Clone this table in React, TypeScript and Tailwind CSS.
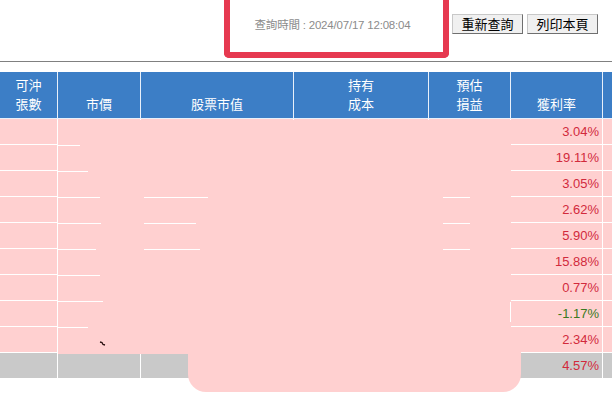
import React from "react";

const COLS = "grid-cols-[58px_83px_153px_135px_82px_92px_9px]";

const rates: { v: string; neg?: boolean }[] = [
  { v: "3.04%" },
  { v: "19.11%" },
  { v: "3.05%" },
  { v: "2.62%" },
  { v: "5.90%" },
  { v: "15.88%" },
  { v: "0.77%" },
  { v: "-1.17%", neg: true },
  { v: "2.34%" },
];

const headers: string[][] = [
  ["可沖", "張數"],
  ["市價"],
  ["股票市值"],
  ["持有", "成本"],
  ["預估", "損益"],
  ["獲利率"],
  [""],
];

// white line fragments left visible inside the redacted area: [top, left, width]
const hLines: [number, number, number][] = [
  [145, 58, 22],
  [171, 58, 30],
  [197, 58, 42],
  [197, 144, 64],
  [197, 443, 27],
  [223, 58, 43],
  [223, 144, 52],
  [223, 443, 27],
  [249, 58, 38],
  [249, 144, 56],
  [249, 443, 27],
  [275, 58, 42],
  [301, 58, 45],
  [327, 58, 30],
];

function Button({ children }: { children: React.ReactNode }) {
  return (
    <button className="h-[20px] w-[71px] bg-[#f0f0f0] border border-t-[#c8c8c8] border-l-[#c8c8c8] border-b-[#6f6f6f] border-r-[#6f6f6f] text-[13px] leading-none text-black flex items-center justify-center">
      {children}
    </button>
  );
}

export default function App() {
  return (
    <div
      className="relative w-[612px] h-[400px] bg-white overflow-hidden"
      style={{ fontFamily: '"Liberation Sans", Arial, "Noto Sans CJK TC", sans-serif' }}
    >
      {/* top bar */}
      <div className="flex h-[62px] border-b border-[#808080]">
        <div className="ml-[224px] w-[225px] h-[58px] border-[6px] border-t-0 border-[#e63950] rounded-b-[5px] flex items-center justify-center pr-[8px]">
          <span className="text-[11.5px] text-[#8c8c8c] tracking-[-0.2px]">
            查詢時間 : 2024/07/17 12:08:04
          </span>
        </div>
        <div className="flex gap-[4px] ml-[3px] mt-[14px] h-[20px]">
          <Button>重新查詢</Button>
          <Button>列印本頁</Button>
        </div>
      </div>

      {/* table */}
      <div className="mt-[10px]">
        <div className={`grid ${COLS} h-[47px]`}>
          {headers.map((h, i) => (
            <div
              key={i}
              className="bg-[#3c7ec6] border-r border-b border-[#e8f0fa] last:border-r-0 flex flex-col items-center justify-end pb-[4px] text-white text-[13px] leading-[19px]"
            >
              {h.map((t, j) => (
                <span key={j}>{t}</span>
              ))}
            </div>
          ))}
        </div>
        {rates.map((r, i) => (
          <div key={i} className={`grid ${COLS} h-[26px]`}>
            {[0, 1, 2, 3, 4].map((c) => (
              <div key={c} className="bg-[#ffd0d0] border-r border-b border-white" />
            ))}
            <div
              className={`bg-[#ffd0d0] border-r border-b border-white flex items-center justify-end pr-[3px] text-[13px] ${
                r.neg ? "text-[#3a7a20]" : "text-[#d22a3c]"
              }`}
            >
              {r.v}
            </div>
            <div className="bg-[#ffd0d0] border-b border-white" />
          </div>
        ))}
        <div className={`grid ${COLS} h-[26px]`}>
          {[0, 1, 2, 3, 4].map((c) => (
            <div key={c} className="bg-[#c9c9c9] border-r border-b border-white" />
          ))}
          <div className="bg-[#c9c9c9] border-r border-b border-white flex items-center justify-end pr-[3px] text-[13px] text-[#d22a3c]">
            4.57%
          </div>
          <div className="bg-[#c9c9c9] border-b border-white" />
        </div>
      </div>

      {/* redaction overlays */}
      <div className="absolute left-[58px] top-[120px] w-[453px] h-[234px] bg-[#ffd0d0]" />
      <div className="absolute left-[510px] top-[302px] w-px h-[20px] bg-white" />
      {hLines.map(([t, l, w], i) => (
        <div
          key={i}
          className="absolute h-px bg-white"
          style={{ top: t, left: l, width: w }}
        />
      ))}
      <div className="absolute left-[188px] top-[328px] w-[333px] h-[64px] bg-[#ffd0d0] rounded-b-[18px]" />
      <svg className="absolute left-[99px] top-[341px]" width="8" height="6" viewBox="0 0 8 6">
        <path d="M1 1 L3 1.5 L4 3.5 L6 4" stroke="#2a1010" strokeWidth="1.3" fill="none" />
      </svg>
    </div>
  );
}
